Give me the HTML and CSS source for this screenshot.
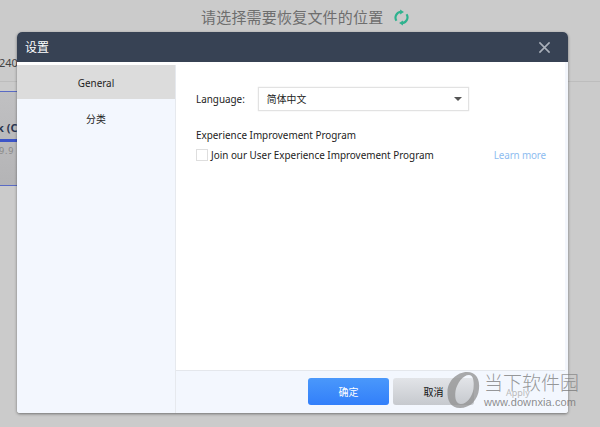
FILE: index.html
```html
<!DOCTYPE html>
<html lang="en">
<head>
  <meta charset="UTF-8">
  <title>设置</title>
  <link rel="stylesheet" href="styles.css">
</head>
<body>
  <!-- Page behind the dialog -->
  <div class="backdrop">
    <div class="page-title">
      <span>请选择需要恢复文件的位置</span>
      <svg class="refresh" width="15" height="17" viewBox="0 0 16 18">
        <path d="M2.6 12.5A6.2 6.2 0 0 1 7 3" fill="none" stroke="#2eb28e" stroke-width="2.3"/>
        <path d="M13.4 5.5A6.2 6.2 0 0 1 9 15" fill="none" stroke="#2eb28e" stroke-width="2.3"/>
        <path d="M6.5 0.4L10.6 3.2L6.5 5.8Z" fill="#2eb28e"/>
        <path d="M9.5 17.6L5.4 14.8L9.5 12.2Z" fill="#2eb28e"/>
      </svg>
    </div>
    <div class="page-rule"></div>
    <div class="drive-size">240</div>
    <div class="drive-card">
      <div class="drive-name">k (C</div>
      <div class="drive-bar"></div>
      <div class="drive-free">9.9 (</div>
    </div>
  </div>

  <div class="dialog">
    <div class="dialog-head">
      <span class="dialog-title">设置</span>
      <svg class="close" width="13" height="13" viewBox="0 0 14 14">
        <path d="M1.5 1.5L12.5 12.5M12.5 1.5L1.5 12.5" stroke="#aab0ba" stroke-width="1.7"/>
      </svg>
    </div>
    <div class="dialog-body">
      <div class="sidebar">
        <div class="tabs">
          <div class="tab active">General</div>
          <div class="tab">分类</div>
        </div>
      </div>
      <div class="main">
        <div class="content">
          <div class="lang-row">
            <span>Language:</span>
            <div class="select">简体中文<i class="caret"></i></div>
          </div>
          <div class="section-title">Experience Improvement Program</div>
          <div class="check-row">
            <span class="checkbox"></span>
            <span class="check-label">Join our User Experience Improvement Program</span>
            <span class="learn">Learn more</span>
          </div>
        </div>
        <div class="footer">
          <button class="btn primary">确定</button>
          <button class="btn cancel">取消</button>
        </div>
      </div>
    </div>
  </div>

  <!-- Watermark over the corner -->
  <div class="watermark">
    <svg class="wm-logo" width="34" height="38" viewBox="0 0 34 38">
      <path fill="#8f8f8f" fill-opacity="0.75" fill-rule="evenodd" d="M21 1C30 1 34 8 33 18C32 29 24 37 14 37C5 37 1 30 1.500 20C2 10 11 1 21 1ZM23 4C17 4 11 12 9.500 20C8.500 27 10 33 15 33C21 33 26 26 27.500 18C28.500 10 27 4 23 4Z"/>
    </svg>
    <div class="wm-text">
      <div class="wm-cn">当下软件园</div>
      <div class="wm-url">www.downxia.com</div>
    </div>
  </div>
  <span class="apply">Apply</span>
</body>
</html>
```

FILE: styles.css
```css
* {
  box-sizing: border-box;
}
html, body {
  height: 100%;
}
body {
  margin: 0;
  background-color: #cbcbcb;
  font-family: "Noto Sans", "Noto Sans CJK SC", sans-serif;
  font-size: 9.9px;
  color: #222;
  overflow: hidden;
}

/* backdrop */
.page-title {
  position: absolute;
  top: 6px;
  left: 201px;
  display: flex;
  align-items: center;
  gap: 11px;
  font-family: "Noto Sans CJK SC", serif;
  font-size: 15px;
  line-height: 22px;
  letter-spacing: 0.2px;
  color: #6e6e6e;
}
.page-rule {
  position: absolute;
  top: 81px;
  left: 0;
  right: 0;
  height: 1px;
  background-color: #bdbdbd;
}
.drive-size {
  position: absolute;
  top: 55px;
  left: -1px;
  font-size: 11px;
  color: #444;
}
.drive-card {
  position: absolute;
  top: 91px;
  left: 0;
  width: 17px;
  height: 95px;
  overflow: hidden;
  background: linear-gradient(#c0c0c2, #b4b4b6);
  border-top: 1px solid #5a6bc4;
  border-bottom: 1px solid #5a6bc4;
}
.drive-name {
  position: absolute;
  top: 28px;
  left: -3px;
  font-weight: 700;
  font-size: 11px;
  color: #2a3550;
  white-space: nowrap;
}
.drive-bar {
  position: absolute;
  top: 47px;
  left: 0;
  width: 100%;
  height: 3px;
  background-color: #3c55c8;
}
.drive-free {
  position: absolute;
  top: 52px;
  left: -1px;
  font-size: 9px;
  letter-spacing: 0.8px;
  color: #888;
  white-space: nowrap;
}

/* dialog */
.dialog {
  position: absolute;
  top: 32px;
  left: 17px;
  width: 551px;
  height: 381px;
  display: flex;
  flex-direction: column;
  background-color: #fff;
  border-radius: 5px 5px 3px 3px;
  box-shadow: 0 1px 3px rgba(0, 0, 0, 0.45);
  overflow: hidden;
}
.dialog-head {
  height: 30px;
  flex: none;
  display: flex;
  align-items: center;
  justify-content: space-between;
  padding: 0 17px 0 8px;
  background-color: #374254;
}
.dialog-title {
  font-size: 12px;
  color: #fff;
}
.dialog-body {
  flex: 1;
  display: flex;
  min-height: 0;
}
.sidebar {
  width: 159px;
  flex: none;
  display: flex;
  padding-top: 3px;
}
.tabs {
  flex: 1;
  background-color: #f3f7fe;
  border-right: 1px solid #e6e9ee;
}
.tab {
  height: 35px;
  margin-bottom: 1px;
  display: flex;
  align-items: center;
  justify-content: center;
  color: #222;
}
.tab.active {
  height: 34px;
  margin-bottom: 2px;
  padding-top: 2px;
  background-color: #dcdcdc;
}
.main {
  flex: 1;
  display: flex;
  flex-direction: column;
  border-right: 3px solid #f3f6fc;
}
.content {
  flex: 1;
  padding: 25px 19px 0 20px;
}
.lang-row {
  display: flex;
  align-items: center;
  gap: 13px;
}
.select {
  position: relative;
  width: 211px;
  height: 24px;
  padding-left: 8px;
  line-height: 22px;
  border: 1px solid #e2e2e2;
  box-shadow: 0 0 1px rgba(0, 0, 0, 0.15);
}
.caret {
  position: absolute;
  top: 9px;
  right: 6px;
  border-left: 4px solid transparent;
  border-right: 4px solid transparent;
  border-top: 4px solid #555;
}
.section-title {
  margin-top: 17px;
  line-height: 14px;
}
.check-row {
  display: flex;
  align-items: center;
  margin-top: 6px;
  line-height: 14px;
}
.checkbox {
  width: 12px;
  height: 12px;
  margin-right: 3px;
  background-color: #fff;
  border: 1px solid #dedede;
}
.learn {
  margin-left: auto;
  letter-spacing: -0.15px;
  color: #8dbcf0;
}
.footer {
  height: 43px;
  flex: none;
  display: flex;
  gap: 4px;
  padding: 7px 0 0 132px;
  background-color: #f3f7fe;
  border-top: 1px solid #e4e7ec;
}
.btn {
  width: 81px;
  height: 27px;
  border: 0;
  border-radius: 3px;
  font-family: inherit;
  font-size: 10px;
}
.btn.primary {
  background: linear-gradient(#4a98fb, #327ffa);
  color: #fff;
}
.btn.cancel {
  background: linear-gradient(#e2e4e8, #c6c9ce);
  color: #111;
}

/* watermark */
.watermark {
  position: absolute;
  top: 371px;
  left: 446px;
  display: flex;
  gap: 4px;
}
.wm-cn {
  font-size: 19px;
  font-weight: 300;
  line-height: 24px;
  color: rgba(120, 120, 120, 0.75);
}
.wm-url {
  margin-top: 1px;
  font-family: "Liberation Sans", sans-serif;
  font-size: 11px;
  letter-spacing: 0.1px;
  color: rgba(120, 120, 120, 0.85);
}
.apply {
  position: absolute;
  top: 386px;
  left: 506px;
  font-size: 9px;
  color: #bbb;
}
```
